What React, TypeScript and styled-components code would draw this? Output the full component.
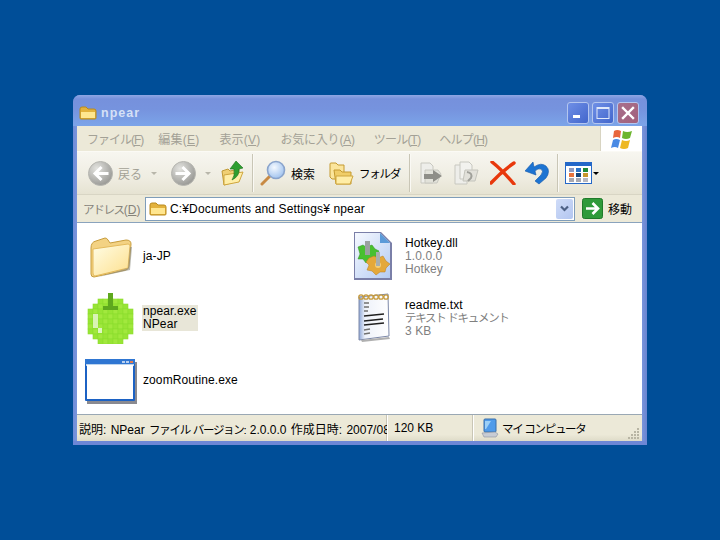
import React from 'react'
import styled, { createGlobalStyle } from 'styled-components'

const GlobalStyle = createGlobalStyle`
  html, body {
    margin: 0;
    height: 100%;
    background: #004e98;
  }
  #root {
    height: 100%;
  }
`

const FONT = `"Liberation Sans", "Noto Sans CJK JP", sans-serif`

const Desktop = styled.div`
  width: 720px;
  height: 540px;
  padding: 95px 0 0 73px;
  box-sizing: border-box;
  background: #004e98;
  font-family: ${FONT};
  font-size: 12px;
  color: #000;
`

const Window = styled.div`
  width: 574px;
  height: 350px;
  box-sizing: border-box;
  display: flex;
  flex-direction: column;
  padding: 0 5px 4px 4px;
  border-radius: 7px 7px 0 0;
  background: linear-gradient(90deg, #6f8cd8 0, #7c98de 6px, #7c98de 568px, #6a84d0 100%);
  box-shadow: inset 0 -4px 0 #6d87d6;
`

const TitleBar = styled.div`
  height: 31px;
  flex: none;
  box-sizing: border-box;
  margin: 0 -5px 0 -4px;
  padding: 4px 8px 0 6px;
  display: flex;
  align-items: center;
  border-radius: 7px 7px 0 0;
  background: linear-gradient(180deg, #8fa6e4 0, #7691dc 4px, #7693de 14px, #7ba3e8 30px);
`

const TitleText = styled.span`
  margin-left: 4px;
  font-size: 12.5px;
  font-weight: bold;
  letter-spacing: 1px;
  color: #d5e0f6;
`

const WinButtons = styled.div`
  margin-left: auto;
  display: flex;
  gap: 3px;
`

const WinButton = styled.div<{ $close?: boolean }>`
  width: 22px;
  height: 22px;
  box-sizing: border-box;
  display: flex;
  align-items: center;
  justify-content: center;
  border: 1px solid #b4c6ef;
  border-radius: 3px;
  background: ${(p) =>
    p.$close
      ? 'linear-gradient(135deg, #a8708c, #a2607c)'
      : 'linear-gradient(135deg, #6f8fe6, #4266cc)'};
`

const MenuBar = styled.div`
  height: 25px;
  flex: none;
  display: flex;
  align-items: center;
  padding-left: 2px;
  background: #ece9d8;
  border-bottom: 1px solid #fbfaf5;
`

const MenuItem = styled.span<{ $gap: number; $spacing?: number }>`
  margin-left: ${(p) => p.$gap}px;
  color: #a3a196;
  letter-spacing: ${(p) => p.$spacing ?? 0.2}px;
  white-space: nowrap;
`

const FlagCell = styled.div`
  margin-left: auto;
  width: 42px;
  height: 25px;
  display: flex;
  align-items: center;
  justify-content: center;
  background: #fff;
  border-left: 1px solid #d8d4c2;
  box-sizing: border-box;
`

const Toolbar = styled.div`
  height: 43px;
  flex: none;
  display: flex;
  align-items: center;
  background: linear-gradient(180deg, #f7f6f0 0, #efede2 60%, #e6e3d2 100%);
  border-bottom: 1px solid #d8d5c4;
  box-sizing: border-box;
`

const ToolItem = styled.div<{ $left: number }>`
  margin-left: ${(p) => p.$left}px;
  display: flex;
  align-items: center;
  flex: none;
`

const ToolLabel = styled.span<{ $muted?: boolean; $left?: number }>`
  margin-left: ${(p) => p.$left ?? 5}px;
  color: ${(p) => (p.$muted ? '#a3a196' : '#000')};
  white-space: nowrap;
`

// kana in the original bitmap font are narrower than a full em
const Kana = styled.span`
  font-size: 11.5px;
  letter-spacing: -1.3px;
`

const DropArrow = styled.span<{ $dark?: boolean }>`
  display: block;
  width: 0;
  height: 0;
  border-left: 3px solid transparent;
  border-right: 3px solid transparent;
  border-top: 3px solid ${(p) => (p.$dark ? '#000' : '#b8b6aa')};
`

const Separator = styled.div<{ $left: number }>`
  margin-left: ${(p) => p.$left}px;
  width: 1px;
  height: 38px;
  flex: none;
  background: #c9c6b6;
  box-shadow: 1px 0 0 #faf9f4;
`

const AddressBar = styled.div`
  height: 27px;
  flex: none;
  display: flex;
  align-items: center;
  background: #ece9d8;
  box-sizing: border-box;
`

const AddressLabel = styled.span`
  margin-left: 6px;
  width: 62px;
  flex: none;
  color: #85837a;
  white-space: nowrap;
`

const AddressField = styled.div`
  width: 430px;
  height: 24px;
  margin-top: 1px;
  box-sizing: border-box;
  flex: none;
  display: flex;
  align-items: center;
  padding: 0 1px 0 3px;
  background: #fff;
  border: 1px solid #7f9db9;
`

const AddressText = styled.span`
  margin-left: 3px;
  letter-spacing: 0.15px;
  white-space: nowrap;
`

const ComboButton = styled.div`
  margin-left: auto;
  width: 17px;
  height: 20px;
  display: flex;
  align-items: center;
  justify-content: center;
  background: linear-gradient(135deg, #cfdcf8, #b3c6f0);
  border-radius: 2px;
`

const GoButton = styled.div`
  margin-left: 7px;
  display: flex;
  align-items: center;
`

const Content = styled.div`
  flex: 1;
  min-height: 0;
  display: grid;
  grid-template-columns: 262px 1fr;
  grid-auto-rows: 62px;
  padding: 2px 0 0 8px;
  background: #fff;
  border-top: 1px solid #8aa3bd;
  border-bottom: 1px solid #9aa8b4;
`

const Tile = styled.div`
  display: flex;
  align-items: center;
`

const TileIcon = styled.div`
  width: 52px;
  height: 52px;
  flex: none;
  display: flex;
  align-items: center;
  justify-content: center;
`

const TileText = styled.div<{ $selected?: boolean }>`
  margin-left: 5px;
  padding: 0 1px;
  line-height: 13px;
  letter-spacing: 0.1px;
  background: ${(p) => (p.$selected ? '#e8e6d8' : 'transparent')};
`

const TileLine = styled.div<{ $muted?: boolean }>`
  color: ${(p) => (p.$muted ? '#808080' : '#000')};
  white-space: nowrap;
`

const StatusBar = styled.div`
  height: 26px;
  flex: none;
  display: flex;
  align-items: center;
  background: linear-gradient(180deg, #ece9d8 0, #ece9d8 75%, #dedbc8 100%);
`

const StatusCell = styled.div<{ $width: number; $left?: number; $plain?: boolean }>`
  width: ${(p) => p.$width}px;
  height: 100%;
  flex: none;
  box-sizing: border-box;
  display: flex;
  align-items: center;
  overflow: hidden;
  white-space: pre;
  padding-left: ${(p) => p.$left ?? 6}px;
  border-right: ${(p) => (p.$plain ? 'none' : '1px solid #fff')};
  box-shadow: ${(p) => (p.$plain ? 'none' : 'inset -1px 0 0 #c9c6b6')};
`

const StatusText = styled.span`
  word-spacing: 1px;
`

const StatusIcon = styled.div`
  flex: none;
  line-height: 0;
`

const Grip = styled.div`
  margin-left: auto;
  align-self: flex-end;
  margin-right: 2px;
  margin-bottom: 1px;
  line-height: 0;
`

const FolderSmall = () => (
  <svg width="18" height="16" viewBox="0 0 18 16" style={{ flex: 'none' }}>
    <path d="M1 4 Q1 2 3 2 H7 L9 4 H15 Q17 4 17 6 V13 Q17 14 16 14 H2 Q1 14 1 13 Z" fill="#e3b23c" stroke="#b98a1e" />
    <path d="M2 7 H16 V13 H2 Z" fill="#ffe68f" />
  </svg>
)

const FolderBig = () => (
  <svg width="46" height="50" viewBox="0 -4 46 50">
    <defs>
      <linearGradient id="fb" x1="0" y1="0" x2="1" y2="1">
        <stop offset="0" stopColor="#fffde6" />
        <stop offset="1" stopColor="#fddf8c" />
      </linearGradient>
    </defs>
    <path d="M3 13 Q3 7 8 6 L17 3 Q19 3 20 5 L22 8 L38 5 Q43 5 43 9 L41 31 Q41 34 38 35 L6 42 Q3 42 3 39 Z" fill="#f3d283" stroke="#c79c3c" />
    <path d="M5 14 L40 9 Q42 9 42 11 L40 33 L7 41 Q5 41 5 38 Z" fill="url(#fb)" stroke="#e4ba5c" />
    <path d="M42 12 L44 12 L42 35 L10 42 L40 33 Z" fill="#8d8d80" opacity="0.6" />
  </svg>
)

// pear body as rows of [first column, cell count] on a 9x9 grid of 5px cells
const PEAR_ROWS: [number, number][] = [
  [2, 5], [1, 7], [0, 9], [0, 9], [0, 9], [0, 9], [0, 9], [1, 7], [2, 5],
]

const PearIcon = () => (
  <svg width="48" height="52" viewBox="0 0 48 52">
    {PEAR_ROWS.map(([start, count], row) =>
      Array.from({ length: count }, (_, i) => (
        <rect
          key={`${row}-${i}`}
          x={1 + (start + i) * 5}
          y={7 + row * 5}
          width="5"
          height="5"
          fill={(start + i + row) % 2 ? '#a2e83e' : '#98e435'}
          stroke="#8ddc2e"
          strokeWidth="0.6"
        />
      )),
    )}
    <rect x="6" y="22" width="5" height="14" fill="#d9f3b5" />
    <rect x="11" y="36" width="4" height="5" fill="#dff6c2" />
    <rect x="21" y="1" width="5" height="17" fill="#5ea81e" />
    <rect x="16" y="14" width="15" height="4" fill="#5ea81e" />
  </svg>
)

const AppWindowIcon = () => (
  <svg width="52" height="50" viewBox="0 -4 52 50">
    <rect x="2" y="3" width="50" height="42" fill="#8a8a90" />
    <rect x="0" y="0" width="50" height="42" rx="1" fill="#1c62c4" />
    <rect x="0" y="0" width="50" height="5" fill="#2f76d2" />
    <rect x="1" y="5" width="48" height="2" fill="#bcd4ee" />
    <rect x="2" y="6" width="46" height="34" fill="#fff" />
    <rect x="37" y="2" width="3" height="2" fill="#b8d0f0" />
    <rect x="41" y="2" width="3" height="2" fill="#b8d0f0" />
    <rect x="45" y="2" width="3" height="2" fill="#e07a50" />
  </svg>
)

const DllIcon = () => (
  <svg width="42" height="52" viewBox="0 0 42 52">
    <defs>
      <linearGradient id="dl" x1="0" y1="0" x2="1" y2="1">
        <stop offset="0" stopColor="#f6f9ff" />
        <stop offset="1" stopColor="#b4cbf2" />
      </linearGradient>
    </defs>
    <path d="M2 2 H29 L40 13 V50 H2 Z" fill="#7a7fa8" />
    <path d="M3 3 H28 L38 13 V48 H3 Z" fill="url(#dl)" />
    <path d="M28 3 L38 13 H28 Z" fill="#5b9ad8" />
    <path d="M6 17 L11 15 L14 17 L20 15 L23 19 L27 21 L24 26 L24 30 L18 30 L14 33 L11 29 L6 29 L8 24 Z" fill="#48c030" stroke="#2f9020" strokeWidth="0.5" />
    <path d="M17 28 L22 26 L26 28 L31 26 L34 31 L38 34 L34 38 L33 42 L28 42 L24 45 L20 41 L15 40 L17 35 L14 32 Z" fill="#e4a83a" stroke="#b87f1c" strokeWidth="0.5" />
    <circle cx="26" cy="35" r="3" fill="#f4cf78" />
    <rect x="13" y="11" width="5" height="14" fill="#9aa0a0" />
    <rect x="24" y="22" width="4" height="14" fill="#a8aeae" />
  </svg>
)

const NotepadIcon = () => (
  <svg width="40" height="52" viewBox="0 0 40 52">
    <defs>
      <linearGradient id="np" x1="0" y1="0" x2="1" y2="0">
        <stop offset="0" stopColor="#8fa8d8" />
        <stop offset="0.2" stopColor="#eef2fa" />
        <stop offset="1" stopColor="#fff" />
      </linearGradient>
    </defs>
    <path d="M6 5 L35 2 L36 44 L6 48 Z" fill="url(#np)" stroke="#7c88a8" />
    <path d="M8 48 L36 45 L37 47 L9 50 Z" fill="#b0b0b0" />
    {[8, 13, 18, 23, 28, 33].map((x) => (
      <circle key={x} cx={x} cy={5} r="2.2" fill="none" stroke="#c79a3a" strokeWidth="1.3" />
    ))}
    <path d="M11 11 H16 M11 15 H16 M11 19 H15" stroke="#707070" strokeWidth="1.3" />
    <path d="M11 24 L31 22 M11 29 L30 27 M11 33 L31 31" stroke="#202020" strokeWidth="1.4" />
    <path d="M11 38 L17 37 M11 42 L17 41" stroke="#707070" strokeWidth="1.3" />
  </svg>
)

const NavCircle = ({ dir }: { dir: 'left' | 'right' }) => (
  <svg width="25" height="25" viewBox="0 0 25 25">
    <defs>
      <radialGradient id="nv" cx="0.35" cy="0.3" r="0.8">
        <stop offset="0" stopColor="#e4e4e0" />
        <stop offset="1" stopColor="#92928e" />
      </radialGradient>
    </defs>
    <circle cx="12.5" cy="12.5" r="12" fill="url(#nv)" stroke="#b6b6b0" />
    <path
      d={dir === 'left' ? 'M19 12.5 H8 M12.5 7 L7 12.5 L12.5 18' : 'M6 12.5 H17 M12.5 7 L18 12.5 L12.5 18'}
      stroke="#fff"
      strokeWidth="3"
      fill="none"
      strokeLinecap="square"
    />
  </svg>
)

const UpFolder = () => (
  <svg width="23" height="26" viewBox="0 0 23 26">
    <path d="M1 11 L7 9 L9 11 L18 9 L17 21 L3 25 Z" fill="#f0cf73" stroke="#c09a38" />
    <path d="M3 15 L22 12 L18 22 L3 25 Z" fill="#ffeea8" stroke="#cfa63e" />
    <path d="M11 20 Q14 16 13 9 L9 9 L15 1 L22 8 L18 9 Q19 16 11 20 Z" fill="#2e9e30" stroke="#187018" strokeWidth="0.6" />
  </svg>
)

const SearchIcon = () => (
  <svg width="27" height="27" viewBox="0 0 27 27">
    <defs>
      <radialGradient id="ln" cx="0.4" cy="0.35" r="0.7">
        <stop offset="0" stopColor="#f4f9ff" />
        <stop offset="1" stopColor="#9cc0ee" />
      </radialGradient>
    </defs>
    <path d="M10 16 L2 24" stroke="#c88a44" strokeWidth="3" strokeLinecap="round" />
    <circle cx="16" cy="10" r="8.5" fill="url(#ln)" stroke="#8aa4cc" strokeWidth="1.6" />
  </svg>
)

const FoldersIcon = () => (
  <svg width="25" height="25" viewBox="0 0 25 25">
    <path d="M1 3 Q1 2 2 2 H7 L9 4 H15 V18 H3 L1 16 Z" fill="#fbe59c" stroke="#c49a30" />
    <path d="M5 9 H11 L13 11 H22 V23 H7 Z" fill="#f0cd68" stroke="#c49a30" />
    <path d="M7 15 H24 L21 23 H7 Z" fill="#ffeda6" stroke="#cfa63e" />
  </svg>
)

const MoveToIcon = () => (
  <svg width="24" height="24" viewBox="0 0 24 24">
    <path d="M2 2 H11 L14 5 V22 H2 Z" fill="#eeeeea" stroke="#c8c8c0" />
    <path d="M6 9 H19 L22 13 L18 22 H6 Z" fill="#e2e2da" stroke="#c8c8c0" />
    <path d="M5 13 H14 V9 L23 15 L14 21 V18 H5 Z" fill="#8e8e88" />
  </svg>
)

const CopyToIcon = () => (
  <svg width="25" height="24" viewBox="0 0 25 24">
    <path d="M1 4 H10 L13 7 V23 H1 Z" fill="#eeeeea" stroke="#c8c8c0" />
    <path d="M6 1 H15 L18 4 V18 H6 Z" fill="#f2f2ee" stroke="#c8c8c0" />
    <path d="M11 9 H24 L21 20 H9 Z" fill="#e2e1da" stroke="#c4c4bc" />
    <path d="M13 11 Q19 12 17 17 L14 20" stroke="#a0a09a" strokeWidth="2" fill="none" />
  </svg>
)

const DeleteIcon = () => (
  <svg width="26" height="24" viewBox="0 0 26 24">
    <path d="M2 1 Q11 8 24 23 M24 2 Q12 10 1 22" stroke="#e8380c" strokeWidth="3.4" fill="none" strokeLinecap="round" />
  </svg>
)

const UndoIcon = () => (
  <svg width="25" height="24" viewBox="0 0 25 24">
    <path d="M0 10 L8 1 L9 6 Q16 1 21 5 Q26 10 21 17 L14 23 L10 20 L16 14 Q19 10 16 8 Q13 7 10 10 L11 14 Z" fill="#1d74d2" stroke="#1458a8" strokeWidth="0.6" />
  </svg>
)

const VIEW_COLORS = ['#8e9ac0', '#2b74c8', '#1f8a3a', '#e8743c', '#17477e', '#c8962a', '#a8a8b0', '#a8a8b0', '#b8b8c0']

const ViewsIcon = () => (
  <svg width="27" height="22" viewBox="0 0 27 22">
    <rect x="0.5" y="0.5" width="26" height="21" fill="#fff" stroke="#2468c8" />
    <rect x="0" y="0" width="27" height="4" fill="#2468c8" />
    {VIEW_COLORS.map((c, i) => (
      <rect key={i} x={4 + (i % 3) * 7} y={6 + Math.floor(i / 3) * 5} width="5" height="4" fill={c} />
    ))}
  </svg>
)

const WinFlag = () => (
  <svg width="24" height="22" viewBox="0 0 24 22">
    <path d="M4 3 Q7 1 11 3 L10 10 Q7 8 3 10 Z" fill="#e8663c" />
    <path d="M13 3 Q17 5 22 3 L20 10 Q16 12 12 10 Z" fill="#6cb52e" />
    <path d="M3 12 Q6 10 10 12 L8 20 Q5 18 1 20 Z" fill="#4a8ae4" />
    <path d="M12 12 Q16 14 20 12 L18 20 Q14 22 10 20 Z" fill="#eeb822" />
  </svg>
)

const MyComputerIcon = () => (
  <svg width="18" height="20" viewBox="0 0 18 20">
    <rect x="3" y="1" width="12" height="13" rx="1" fill="#4f9bea" stroke="#3b6ea8" />
    <path d="M4 3 H10 L5 11 H4 Z" fill="#9cd0f8" />
    <path d="M1 15 L14 14 L17 16 L15 19 H3 Z" fill="#c8ccd4" stroke="#8c92a0" strokeWidth="0.6" />
  </svg>
)

const GripDots = () => (
  <svg width="12" height="12" viewBox="0 0 12 12">
    {[[9, 0], [6, 3], [9, 3], [3, 6], [6, 6], [9, 6], [0, 9], [3, 9], [6, 9], [9, 9]].map(([x, y]) => (
      <rect key={`${x}-${y}`} x={x} y={y} width="2" height="2" fill="#b8b5a4" />
    ))}
  </svg>
)

const App: React.FC = () => (
  <>
    <GlobalStyle />
    <Desktop>
      <Window>
        <TitleBar>
          <FolderSmall />
          <TitleText>npear</TitleText>
          <WinButtons>
            <WinButton>
              <svg width="12" height="12" viewBox="0 0 12 12">
                <rect x="1" y="8" width="7" height="3" fill="#fff" />
              </svg>
            </WinButton>
            <WinButton>
              <svg width="14" height="14" viewBox="0 0 14 14">
                <rect x="1" y="1.5" width="12" height="11" fill="none" stroke="#dfe8fa" />
                <rect x="1" y="1" width="12" height="2" fill="#dfe8fa" />
              </svg>
            </WinButton>
            <WinButton $close>
              <svg width="14" height="14" viewBox="0 0 14 14">
                <path d="M2 2 L12 12 M12 2 L2 12" stroke="#fff" strokeWidth="2.4" strokeLinecap="square" />
              </svg>
            </WinButton>
          </WinButtons>
        </TitleBar>

        <MenuBar>
          <MenuItem $gap={8} $spacing={-1}>ファイル(<u>F</u>)</MenuItem>
          <MenuItem $gap={15}>編集(<u>E</u>)</MenuItem>
          <MenuItem $gap={20}>表示(<u>V</u>)</MenuItem>
          <MenuItem $gap={20} $spacing={-0.2}>お気に入り(<u>A</u>)</MenuItem>
          <MenuItem $gap={19} $spacing={-0.8}>ツール(<u>T</u>)</MenuItem>
          <MenuItem $gap={19} $spacing={-0.8}>ヘルプ(<u>H</u>)</MenuItem>
          <FlagCell>
            <WinFlag />
          </FlagCell>
        </MenuBar>

        <Toolbar>
          <ToolItem $left={11}>
            <NavCircle dir="left" />
            <ToolLabel $muted>戻る</ToolLabel>
          </ToolItem>
          <ToolItem $left={9}>
            <DropArrow />
          </ToolItem>
          <ToolItem $left={14}>
            <NavCircle dir="right" />
          </ToolItem>
          <ToolItem $left={9}>
            <DropArrow />
          </ToolItem>
          <ToolItem $left={10}>
            <UpFolder />
          </ToolItem>
          <Separator $left={8} />
          <ToolItem $left={7}>
            <SearchIcon />
            <ToolLabel $left={4}>検索</ToolLabel>
          </ToolItem>
          <ToolItem $left={14}>
            <FoldersIcon />
            <ToolLabel><Kana>フォルダ</Kana></ToolLabel>
          </ToolItem>
          <Separator $left={9} />
          <ToolItem $left={9}>
            <MoveToIcon />
          </ToolItem>
          <ToolItem $left={11}>
            <CopyToIcon />
          </ToolItem>
          <ToolItem $left={11}>
            <DeleteIcon />
          </ToolItem>
          <ToolItem $left={9}>
            <UndoIcon />
          </ToolItem>
          <Separator $left={7} />
          <ToolItem $left={7}>
            <ViewsIcon />
          </ToolItem>
          <ToolItem $left={1}>
            <DropArrow $dark />
          </ToolItem>
        </Toolbar>

        <AddressBar>
          <AddressLabel><Kana>アドレス</Kana>(<u>D</u>)</AddressLabel>
          <AddressField>
            <FolderSmall />
            <AddressText>C:¥Documents and Settings¥ npear</AddressText>
            <ComboButton>
              <svg width="11" height="9" viewBox="0 0 11 9">
                <path d="M2 1.5 L5.5 5 L9 1.5" stroke="#4d6185" strokeWidth="2.2" fill="none" />
              </svg>
            </ComboButton>
          </AddressField>
          <GoButton>
            <svg width="21" height="21" viewBox="0 0 21 21">
              <rect x="0.5" y="0.5" width="20" height="20" rx="2" fill="#2f9a3a" stroke="#1f7a2a" />
              <path d="M4 10.5 H15 M10.5 5 L16 10.5 L10.5 16" stroke="#fff" strokeWidth="2.6" fill="none" />
            </svg>
            <ToolLabel>移動</ToolLabel>
          </GoButton>
        </AddressBar>

        <Content>
          <Tile>
            <TileIcon>
              <FolderBig />
            </TileIcon>
            <TileText>
              <TileLine>ja-JP</TileLine>
            </TileText>
          </Tile>
          <Tile>
            <TileIcon>
              <DllIcon />
            </TileIcon>
            <TileText>
              <TileLine>Hotkey.dll</TileLine>
              <TileLine $muted>1.0.0.0</TileLine>
              <TileLine $muted>Hotkey</TileLine>
            </TileText>
          </Tile>
          <Tile>
            <TileIcon>
              <PearIcon />
            </TileIcon>
            <TileText $selected>
              <TileLine>npear.exe</TileLine>
              <TileLine>NPear</TileLine>
            </TileText>
          </Tile>
          <Tile>
            <TileIcon>
              <NotepadIcon />
            </TileIcon>
            <TileText>
              <TileLine>readme.txt</TileLine>
              <TileLine $muted><Kana>テキスト ドキュメント</Kana></TileLine>
              <TileLine $muted>3 KB</TileLine>
            </TileText>
          </Tile>
          <Tile>
            <TileIcon>
              <AppWindowIcon />
            </TileIcon>
            <TileText>
              <TileLine>zoomRoutine.exe</TileLine>
            </TileText>
          </Tile>
        </Content>

        <StatusBar>
          <StatusCell $width={311} $left={2}>
            <StatusText>説明: NPear <Kana>ファイル バージョン:</Kana> 2.0.0.0 作成日時: 2007/08</StatusText>
          </StatusCell>
          <StatusCell $width={86}>120 KB</StatusCell>
          <StatusCell $width={115} $left={7} $plain>
            <StatusIcon>
              <MyComputerIcon />
            </StatusIcon>
            <ToolLabel $left={3}><Kana>マイ コンピュータ</Kana></ToolLabel>
          </StatusCell>
          <Grip>
            <GripDots />
          </Grip>
        </StatusBar>
      </Window>
    </Desktop>
  </>
)

export default App
